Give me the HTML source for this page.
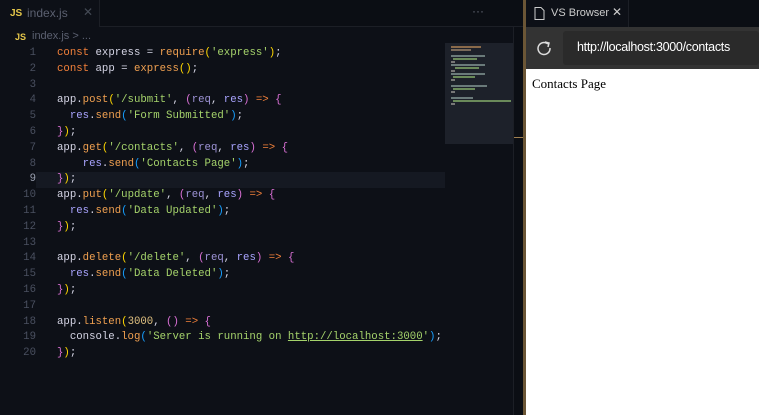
<!DOCTYPE html>
<html><head><style>
*{margin:0;padding:0;box-sizing:border-box}
body{width:759px;height:415px;overflow:hidden;background:#0d1017;font-family:"Liberation Sans",sans-serif;position:relative}
.tabs{position:absolute;left:0;top:0;width:523px;height:27px;background:#0b0e14;border-bottom:1px solid #1c1f26}
.tab{position:absolute;left:0;top:0;width:100px;height:27px;background:#0d1017;border-right:1px solid #1c1f26}
.js{color:#e6c84a;font-weight:bold;font-size:10px;position:absolute}
.code{position:absolute;left:0;top:46px;font-family:"Liberation Mono",monospace;font-size:10.7px;line-height:15.8px;white-space:pre}
.ln{position:absolute;left:0;width:36px;text-align:right;color:#4a5060}
.l{position:absolute;left:57px;color:#d4d4e4}
.k{color:#f2803a}.s{color:#a5d36b}.f{color:#f0a050}.p{color:#9d93d6}.r{color:#a9a4ff}.y{color:#ffd700}.m{color:#da70d6}.b{color:#179fff}.o{color:#f2803a}.w{color:#d4d4e4}
.mm{position:absolute;height:2px}
</style></head><body>
<div class="tabs"><div class="tab"><span class="js" style="left:10px;top:8px">JS</span><span style="position:absolute;left:27px;top:6px;font-size:12px;color:#5b6070">index.js</span><span style="position:absolute;left:83px;top:5px;font-size:12px;color:#444a55">✕</span></div>
<span style="position:absolute;left:472px;top:4px;color:#666b78;font-size:12px">···</span></div>
<span class="js" style="left:15px;top:32px;font-size:9px">JS</span><span style="position:absolute;left:32px;top:30px;font-size:11px;color:#5b6070">index.js &gt; ...</span>
<div style="position:absolute;left:36px;top:172px;width:409px;height:16px;background:#151922"></div>
<div style="position:absolute;left:445px;top:43px;width:68px;height:101px;background:#1d212a">
<div class="mm" style="left:6px;top:3px;width:30px;background:#8a6a4a"></div>
<div class="mm" style="left:6px;top:6px;width:20px;background:#7a6a5a"></div>
<div class="mm" style="left:6px;top:12px;width:34px;background:#6a7a7a"></div>
<div class="mm" style="left:8px;top:15px;width:24px;background:#6a8a5a"></div>
<div class="mm" style="left:6px;top:18px;width:4px;background:#777"></div>
<div class="mm" style="left:6px;top:21px;width:34px;background:#6a7a7a"></div>
<div class="mm" style="left:10px;top:24px;width:24px;background:#6a8a5a"></div>
<div class="mm" style="left:6px;top:27px;width:4px;background:#777"></div>
<div class="mm" style="left:6px;top:30px;width:34px;background:#6a7a7a"></div>
<div class="mm" style="left:8px;top:33px;width:22px;background:#6a8a5a"></div>
<div class="mm" style="left:6px;top:36px;width:4px;background:#777"></div>
<div class="mm" style="left:6px;top:42px;width:36px;background:#6a7a7a"></div>
<div class="mm" style="left:8px;top:45px;width:22px;background:#6a8a5a"></div>
<div class="mm" style="left:6px;top:48px;width:4px;background:#777"></div>
<div class="mm" style="left:6px;top:54px;width:22px;background:#6a7a7a"></div>
<div class="mm" style="left:8px;top:57px;width:58px;background:#6a8a5a"></div>
<div class="mm" style="left:6px;top:60px;width:4px;background:#777"></div>
</div>
<div style="position:absolute;left:513px;top:27px;width:10px;height:388px;background:#0b0e14;border-left:1px solid #1c1f26"></div>
<div style="position:absolute;left:514px;top:137px;width:10px;height:1px;background:#a08050"></div>
<div style="position:absolute;left:523px;top:0;width:3px;height:415px;background:#6b5636"></div>
<div class="code">
<div class="ln" style="top:0">1</div><div class="l" style="top:0"><span class="k">const</span> express = <span class="f">require</span><span class="y">(</span><span class="s">'express'</span><span class="y">)</span>;</div>
<div class="ln" style="top:15.8px">2</div><div class="l" style="top:15.8px"><span class="k">const</span> app = <span class="f">express</span><span class="y">()</span>;</div>
<div class="ln" style="top:31.6px">3</div>
<div class="ln" style="top:47.4px">4</div><div class="l" style="top:47.4px">app.<span class="f">post</span><span class="y">(</span><span class="s">'/submit'</span>, <span class="m">(</span><span class="p">req</span>, <span class="r">res</span><span class="m">)</span> <span class="o">=&gt;</span> <span class="m">{</span></div>
<div class="ln" style="top:63.2px">5</div><div class="l" style="top:63.2px">  <span class="r">res</span>.<span class="f">send</span><span class="b">(</span><span class="s">'Form Submitted'</span><span class="b">)</span>;</div>
<div class="ln" style="top:79px">6</div><div class="l" style="top:79px"><span class="m">}</span><span class="y">)</span>;</div>
<div class="ln" style="top:94.8px">7</div><div class="l" style="top:94.8px">app.<span class="f">get</span><span class="y">(</span><span class="s">'/contacts'</span>, <span class="m">(</span><span class="p">req</span>, <span class="r">res</span><span class="m">)</span> <span class="o">=&gt;</span> <span class="m">{</span></div>
<div class="ln" style="top:110.6px">8</div><div class="l" style="top:110.6px">    <span class="r">res</span>.<span class="f">send</span><span class="b">(</span><span class="s">'Contacts Page'</span><span class="b">)</span>;</div>
<div class="ln" style="top:126.4px;color:#9aa0b0">9</div><div class="l" style="top:126.4px"><span class="m">}</span><span class="y">)</span>;</div>
<div class="ln" style="top:142.2px">10</div><div class="l" style="top:142.2px">app.<span class="f">put</span><span class="y">(</span><span class="s">'/update'</span>, <span class="m">(</span><span class="p">req</span>, <span class="r">res</span><span class="m">)</span> <span class="o">=&gt;</span> <span class="m">{</span></div>
<div class="ln" style="top:158px">11</div><div class="l" style="top:158px">  <span class="r">res</span>.<span class="f">send</span><span class="b">(</span><span class="s">'Data Updated'</span><span class="b">)</span>;</div>
<div class="ln" style="top:173.8px">12</div><div class="l" style="top:173.8px"><span class="m">}</span><span class="y">)</span>;</div>
<div class="ln" style="top:189.6px">13</div>
<div class="ln" style="top:205.4px">14</div><div class="l" style="top:205.4px">app.<span class="f">delete</span><span class="y">(</span><span class="s">'/delete'</span>, <span class="m">(</span><span class="p">req</span>, <span class="r">res</span><span class="m">)</span> <span class="o">=&gt;</span> <span class="m">{</span></div>
<div class="ln" style="top:221.2px">15</div><div class="l" style="top:221.2px">  <span class="r">res</span>.<span class="f">send</span><span class="b">(</span><span class="s">'Data Deleted'</span><span class="b">)</span>;</div>
<div class="ln" style="top:237px">16</div><div class="l" style="top:237px"><span class="m">}</span><span class="y">)</span>;</div>
<div class="ln" style="top:252.8px">17</div>
<div class="ln" style="top:268.6px">18</div><div class="l" style="top:268.6px">app.<span class="f">listen</span><span class="y">(</span><span class="s" style="color:#e0c080">3000</span>, <span class="m">()</span> <span class="o">=&gt;</span> <span class="m">{</span></div>
<div class="ln" style="top:284.4px">19</div><div class="l" style="top:284.4px">  console.<span class="f">log</span><span class="b">(</span><span class="s">'Server is running on <span style="text-decoration:underline">http://localhost:3000</span>'</span><span class="b">)</span>;</div>
<div class="ln" style="top:300.2px">20</div><div class="l" style="top:300.2px"><span class="m">}</span><span class="y">)</span>;</div>
</div>
<div style="position:absolute;left:526px;top:0;width:233px;height:27px;background:#0b0e14"></div>
<div style="position:absolute;left:526px;top:0;width:103px;height:27px;background:#0d1017;border-right:1px solid #1c1f26">
<svg style="position:absolute;left:8px;top:7px" width="11" height="13" viewBox="0 0 11 13"><path d="M1 .5h6l3 3v9H1z" fill="none" stroke="#ccc"/></svg>
<span style="position:absolute;left:25px;top:7px;font-size:11px;color:#ccc">VS Browser</span><span style="position:absolute;left:86px;top:5px;font-size:12px;color:#ccc">✕</span></div>
<div style="position:absolute;left:526px;top:27px;width:233px;height:42px;background:#333"></div>
<svg style="position:absolute;left:536px;top:40px" width="16" height="16" viewBox="0 0 16 16"><path d="M12 4A6 6 0 1 0 14 8" fill="none" stroke="#ddd" stroke-width="1.5"/><path d="M9 2l4 1-1 4" fill="none" stroke="#ddd" stroke-width="1.5"/></svg>
<div style="position:absolute;left:563px;top:31px;width:196px;height:34px;background:#2a2a2a;border-radius:3px"></div>
<span style="position:absolute;left:577px;top:40px;font-size:12.5px;color:#fff;letter-spacing:-0.3px">http://localhost:3000/contacts</span>
<div style="position:absolute;left:526px;top:69px;width:233px;height:346px;background:#fff"></div>
<span style="position:absolute;left:532px;top:76px;font-family:'Liberation Serif',serif;font-size:13px;color:#000">Contacts Page</span>
</body></html>
